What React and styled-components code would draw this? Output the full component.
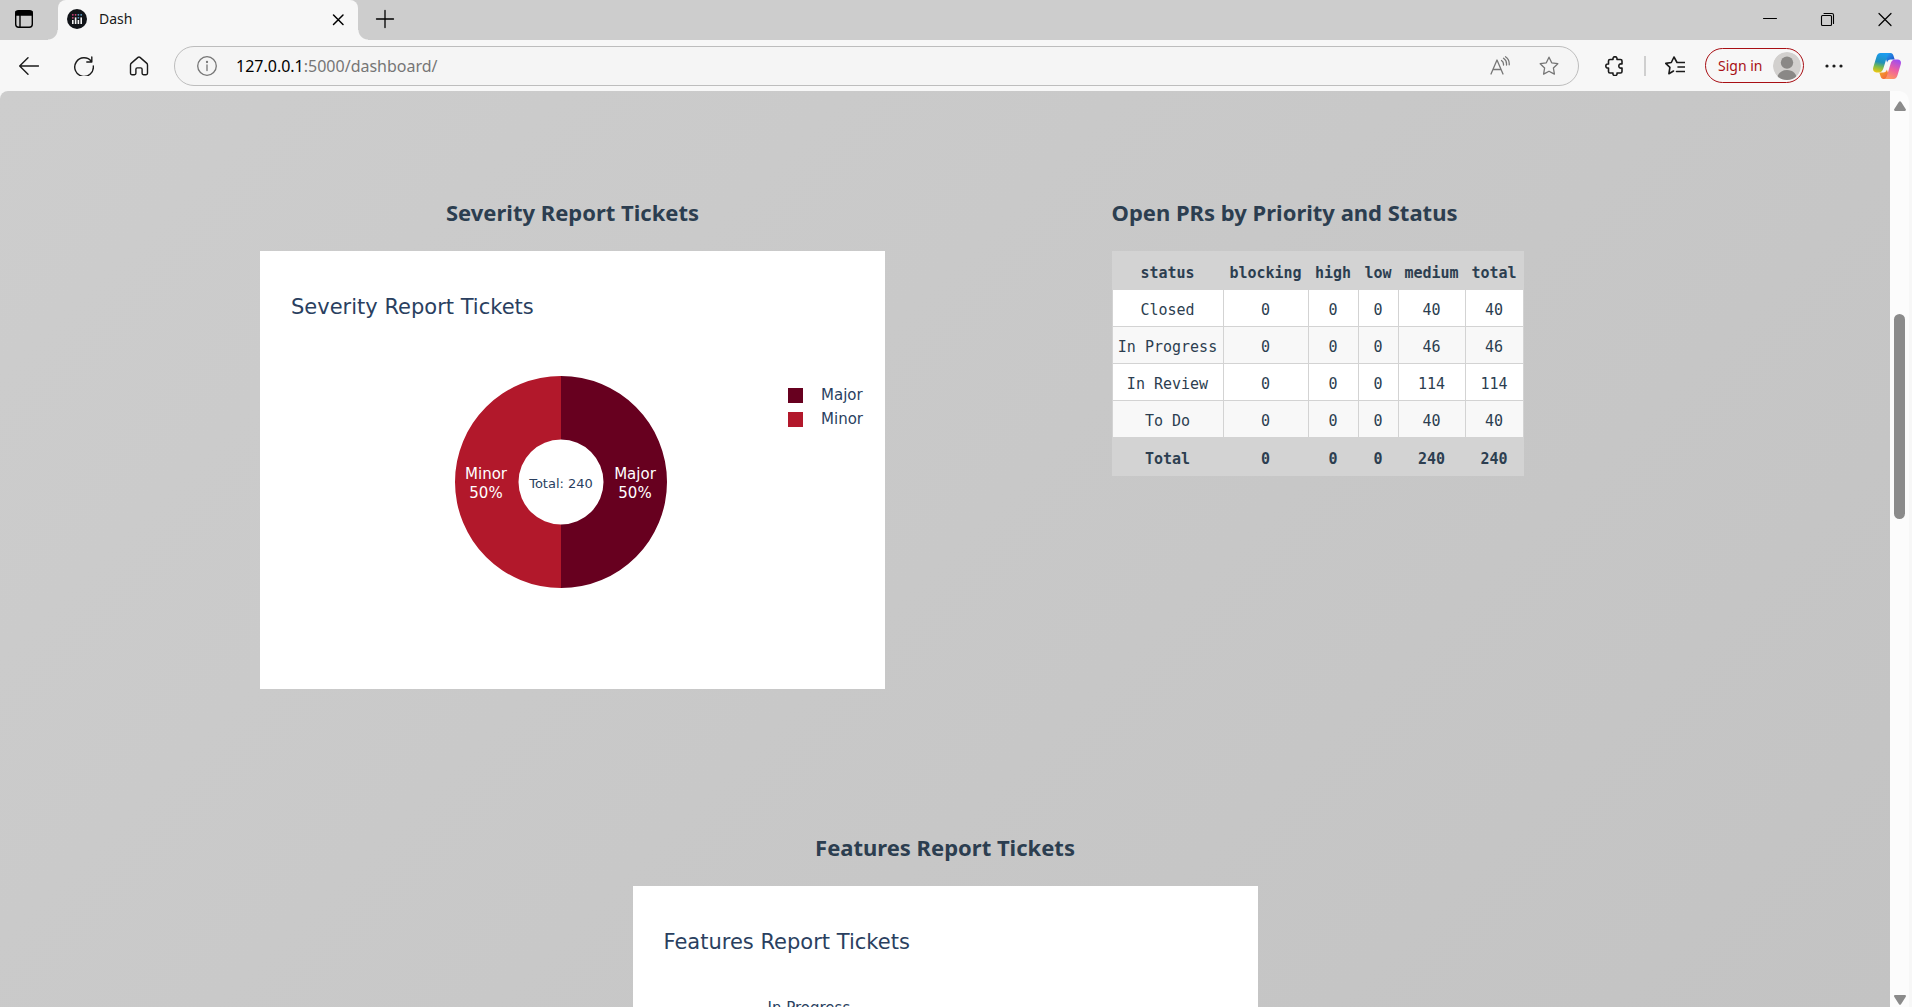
import React from "react";
import styled, { createGlobalStyle, css } from "styled-components";

const uiFont = `"Noto Sans", "Open Sans", sans-serif`;
const chartFont = `"DejaVu Sans", sans-serif`;
const monoFont = `"DejaVu Sans Mono", "Liberation Mono", monospace`;

const GlobalStyle = createGlobalStyle`
  *, *::before, *::after { box-sizing: border-box; }
  body { margin: 0; background: #f7f7f7; font-family: ${uiFont}; }
  h2, h3, figure, ul { margin: 0; padding: 0; }
  button { border: 0; padding: 0; background: none; font: inherit; color: inherit; }
`;

const Window = styled.div`
  height: 100vh;
  display: flex;
  flex-direction: column;
  overflow: hidden;
  background: #f7f7f7;
`;

/* ---------- tab strip ---------- */

const TabStrip = styled.header`
  flex: none;
  display: flex;
  height: 40px;
  background: #cdcdcd;
`;

const StripButton = styled.button`
  width: ${(p) => p.$width}px;
  height: 38px;
  display: grid;
  place-items: center;
`;

const flare = css`
  content: "";
  position: absolute;
  bottom: 0;
  width: 10px;
  height: 10px;
`;

const Tab = styled.div`
  position: relative;
  display: flex;
  align-items: center;
  width: 300px;
  height: 40px;
  margin: 0 0 0 10px;
  padding: 0 10px 2px 9px;
  gap: 12px;
  background: #f7f7f7;
  border-radius: 8px 8px 0 0;
  &::before {
    ${flare}
    left: -10px;
    background: radial-gradient(circle at 0 0, transparent 9px, #f7f7f7 10px);
  }
  &::after {
    ${flare}
    right: -10px;
    background: radial-gradient(circle at 100% 0, transparent 9px, #f7f7f7 10px);
  }
`;

const TabTitle = styled.span`
  flex: 1;
  font-size: 14px;
  line-height: 38px;
  color: #1a1a1a;
`;

const TabClose = styled.button`
  display: grid;
  width: 20px;
  height: 20px;
  place-items: center;
`;

const WindowControls = styled.div`
  display: flex;
  margin-left: auto;
`;

/* ---------- toolbar ---------- */

const Toolbar = styled.nav`
  flex: none;
  display: flex;
  align-items: center;
  height: 51px;
  padding: 0 9px 0 1px;
  color: #1b1b1b;
`;

const ToolButton = styled.button`
  flex: none;
  width: ${(p) => p.$width || 40}px;
  height: 40px;
  display: grid;
  place-items: center;
`;

const AddressBar = styled.div`
  flex: 1;
  display: flex;
  align-items: center;
  height: 40px;
  margin: 0 16px 0 8px;
  padding: 0 5px 0 12px;
  border: 1px solid #bdbdbd;
  border-radius: 20px;
  background: #f5f5f5;
  color: #767676;
`;

const Address = styled.a`
  flex: 1;
  margin-left: 9px;
  font-size: 16px;
  line-height: 38px;
  color: #767676;
  text-decoration: none;
  b { font-weight: 400; color: #000; }
`;

const Divider = styled.span`
  width: 2px;
  height: 20px;
  margin: 0 9px;
  background: #cfcfcf;
`;

const SignIn = styled.button`
  flex: none;
  display: flex;
  align-items: center;
  justify-content: space-between;
  width: 99px;
  height: 35px;
  margin: 0 10px;
  padding: 0 2px 0 12px;
  border: 1px solid #a80f14;
  border-radius: 18px;
  color: #a80f14;
  font-size: 14px;
`;

const CopilotButton = styled.button`
  margin-left: 17px;
  width: 32px;
  height: 32px;
  display: grid;
  place-items: center;
`;

/* ---------- page ---------- */

const Viewport = styled.div`
  flex: 1;
  min-height: 0;
  display: flex;
  margin-right: 3px;
  border-radius: 8px 10px 0 0;
  overflow: hidden;
  background: #fcfcfc;
`;

const Page = styled.main`
  flex: 1;
  min-width: 0;
  overflow: hidden;
  padding: 106px 200px 0;
  background: linear-gradient(135deg, #cdcdcd, #c3c3c3);
`;

const Row = styled.div`
  display: grid;
  grid-template-columns: repeat(${(p) => p.$columns}, minmax(0, 1fr));
  justify-items: center;
  margin-bottom: 143px;
`;

const Section = styled.section`
  display: flex;
  flex-direction: column;
  gap: 24px;
  max-width: 100%;
`;

const Heading = styled.h2`
  font-size: 22px;
  line-height: 30px;
  font-weight: 700;
  color: #2c3e50;
  text-align: ${(p) => p.$align || "center"};
`;

const Figure = styled.figure`
  width: 625px;
  max-width: 100%;
  height: 438px;
  padding: 40px 22px 0 31px;
  background: #fff;
  color: #2a3f5f;
  font-family: ${chartFont};
`;

const FigureTitle = styled.h3`
  font-size: 21px;
  line-height: 32px;
  font-weight: 400;
`;

const FigureBody = styled.div`
  display: flex;
  margin-top: 53px;
`;

const Plot = styled.div`
  flex: 1;
  display: flex;
  justify-content: center;
  padding: 0 5px 0 48px;
  svg { font-family: ${chartFont}; }
`;

const Legend = styled.ul`
  padding-top: 7px;
  list-style: none;
  font-size: 15px;
  line-height: 24px;
`;

const LegendItem = styled.li`
  display: flex;
  align-items: center;
  gap: 18px;
  &::before {
    content: "";
    width: 15px;
    height: 15px;
    background: ${(p) => p.$color};
  }
`;

const AxisLabels = styled.div`
  padding: 40px 0 0 104px;
  font-size: 15px;
  line-height: 20px;
`;

const Table = styled.table`
  width: 412px;
  table-layout: fixed;
  border-collapse: collapse;
  font-family: ${monoFont};
  font-size: 15px;
  line-height: 20px;
  color: #2c3e50;
  text-align: center;
  th, td {
    height: 37px;
    padding: 4px 0 0;
    border: 1px solid #d3d3d3;
    white-space: nowrap;
  }
  th, tfoot td { height: 38px; background: #d3d3d3; font-weight: 700; }
  tbody tr { background: #fff; }
  tbody tr:nth-child(even) { background: #f8f8f8; }
`;

const Col = styled.col`
  width: ${(p) => p.$width}px;
`;

/* ---------- scrollbar ---------- */

const ScrollTrack = styled.div`
  flex: none;
  width: 19px;
  display: flex;
  flex-direction: column;
  align-items: center;
  padding: 10px 0 2px;
`;

const ScrollThumb = styled.div`
  width: 11px;
  height: 205px;
  margin-top: 203px;
  border-radius: 6px;
  background: #8b8b8b;
`;

const ScrollArrow = styled.svg`
  margin-top: ${(p) => (p.$end ? "auto" : "0")};
`;

const Line = ({ size = 20, width = 1.4, children, ...rest }) => (
  <svg width={size} height={size} viewBox="0 0 20 20" fill="none" stroke="currentColor" strokeWidth={width} strokeLinecap="round" strokeLinejoin="round" aria-hidden="true" {...rest}>
    {children}
  </svg>
);

const DashLogo = () => (
  <svg width="20" height="20" viewBox="0 0 20 20" aria-hidden="true">
    <circle cx="10" cy="10" r="10" fill="#111419" />
    <g fill="#f4f4f4">
      <rect x="5" y="11" width="1.6" height="4" />
      <rect x="7.8" y="8.4" width="1.6" height="6.6" />
      <rect x="10.6" y="11" width="1.6" height="4" />
      <rect x="13.4" y="8.4" width="1.6" height="6.6" />
    </g>
    <g fill="#d0447c">
      <circle cx="5.8" cy="5.8" r="0.9" />
      <circle cx="5.8" cy="8.8" r="0.9" />
      <circle cx="8.6" cy="5.8" r="0.9" />
    </g>
    <g fill="#5c9dc8">
      <circle cx="11.4" cy="5.8" r="0.9" />
      <circle cx="11.4" cy="8.8" r="0.9" />
      <circle cx="14.2" cy="5.8" r="0.9" />
    </g>
  </svg>
);

const Avatar = () => (
  <svg width="28" height="28" viewBox="0 0 28 28" aria-hidden="true">
    <clipPath id="avatar"><circle cx="14" cy="14" r="14" /></clipPath>
    <g clipPath="url(#avatar)">
      <circle cx="14" cy="14" r="14" fill="#d2d0ce" />
      <circle cx="14" cy="10.6" r="6.2" fill="#8a8886" />
      <path d="M4 28c0-6 4-10 10-10s10 4 10 10z" fill="#8a8886" />
    </g>
  </svg>
);

const Copilot = () => (
  <svg width="28" height="26" viewBox="0 0 28 26" aria-hidden="true">
    <defs>
      <linearGradient id="cpA" x1="0.4" y1="0" x2="0.2" y2="1">
        <stop offset="0" stopColor="#1a9cf0" />
        <stop offset="0.45" stopColor="#2191b8" />
        <stop offset="0.7" stopColor="#7dbb4a" />
        <stop offset="1" stopColor="#f2c80f" />
      </linearGradient>
      <linearGradient id="cpB" x1="0.7" y1="0" x2="0.3" y2="1">
        <stop offset="0" stopColor="#a04df0" />
        <stop offset="0.5" stopColor="#ee5fa0" />
        <stop offset="1" stopColor="#ff9a5c" />
      </linearGradient>
      <linearGradient id="cpC" x1="0" y1="0" x2="1" y2="1">
        <stop offset="0" stopColor="#27b4f5" />
        <stop offset="1" stopColor="#1b3fc4" />
      </linearGradient>
      <linearGradient id="cpD" x1="0" y1="0" x2="1" y2="1">
        <stop offset="0" stopColor="#f5b51a" />
        <stop offset="1" stopColor="#f0524b" />
      </linearGradient>
    </defs>
    <path d="M11 0h6.600c1.500 0 2.300 1 2.800 2.400l1.300 4.100h-4c-2 0-3 1-3.600 3z" fill="url(#cpC)" />
    <path d="M17 26h-6.600c-1.500 0-2.300-1-2.800-2.400L6.300 19.400h4c2 0 3-1 3.600-3z" fill="url(#cpD)" />
    <path d="M7.500 0H17c-1.600.2-2.300 1.400-2.900 3.200L10.500 15c-.8 2.800-2 4.400-4.600 4.400H3.400C.4 19.400-.5 17 .3 14.300L3.400 4C4.200 1.400 5.400 0 7.500 0z" fill="url(#cpA)" />
    <path d="M20.500 26H11c1.600-.2 2.300-1.400 2.900-3.200L17.500 11c.8-2.800 2-4.500 4.600-4.500h2.500c3 0 3.900 2.400 3.100 5.100L24.600 22c-.8 2.600-2 4-4.100 4z" fill="url(#cpB)" />
  </svg>
);

const Donut = () => (
  <svg width="212" height="212" viewBox="0 0 212 212" role="img" aria-label="Severity donut chart">
    <path d="M106 0a106 106 0 0 1 0 212v-63.500a42.500 42.500 0 0 0 0-85z" fill="#67001f" />
    <path d="M106 0a106 106 0 0 0 0 212v-63.500a42.500 42.500 0 0 1 0-85z" fill="#b2182b" />
    <g fill="#fff" fontSize="15" textAnchor="middle">
      <text x="31" y="103">Minor</text>
      <text x="31" y="122">50%</text>
      <text x="180" y="103">Major</text>
      <text x="180" y="122">50%</text>
    </g>
    <text x="106" y="112" fill="#2a3f5f" fontSize="13" textAnchor="middle">Total: 240</text>
  </svg>
);

const columns = [
  ["status", 111],
  ["blocking", 85],
  ["high", 50],
  ["low", 40],
  ["medium", 67],
  ["total", 58],
];
const rows = [
  ["Closed", 0, 0, 0, 40, 40],
  ["In Progress", 0, 0, 0, 46, 46],
  ["In Review", 0, 0, 0, 114, 114],
  ["To Do", 0, 0, 0, 40, 40],
];
const totals = ["Total", 0, 0, 0, 240, 240];

const star = "M10 1.200l2.700 5.600 6.100.9-4.400 4.300 1 6.100L10 15.200l-5.400 2.900 1-6.100L1.200 7.700l6.100-.9z";

export default function App() {
  return (
    <Window>
      <GlobalStyle />
      <TabStrip>
        <StripButton $width={48} aria-label="Tab actions">
          <Line width={1.4}>
            <rect x="1.700" y="1.700" width="16.600" height="16.600" rx="3" />
            <path d="M2 2.500h16v3.500H2z" fill="currentColor" />
            <path d="M6 6v12" />
          </Line>
        </StripButton>
        <Tab>
          <DashLogo />
          <TabTitle>Dash</TabTitle>
          <TabClose aria-label="Close tab">
            <Line width={1.5}><path d="M5.500 6l9.500 9.500M15 6L5.500 15.500" /></Line>
          </TabClose>
        </Tab>
        <StripButton $width={54} aria-label="New tab">
          <Line width={1.300}><path d="M10 1.500v17M1.500 10h17" /></Line>
        </StripButton>
        <WindowControls>
          <StripButton $width={57} aria-label="Minimize">
            <Line width={1}><path d="M3.500 9.500h13" /></Line>
          </StripButton>
          <StripButton $width={57} aria-label="Restore">
            <Line width={1.100}>
              <rect x="4.500" y="6.500" width="10" height="10" rx="1" />
              <path d="M7 4.500h8c1 0 1.500.5 1.500 1.500v8.500" />
            </Line>
          </StripButton>
          <StripButton $width={57} aria-label="Close">
            <Line width={1.200}><path d="M5 4.500l12 12M17 4.500l-12 12" /></Line>
          </StripButton>
        </WindowControls>
      </TabStrip>

      <Toolbar>
        <ToolButton $width={55} aria-label="Back">
          <Line><path d="M19.500 10H.7M9 1.700L.7 10 9 18.300" /></Line>
        </ToolButton>
        <ToolButton $width={55} aria-label="Refresh">
          <Line><path d="M17.500 5.500A9.300 9.300 0 1 0 19.300 10M17.800 1v5h-5" /></Line>
        </ToolButton>
        <ToolButton $width={55} aria-label="Home">
          <Line><path d="M1.500 9c0-.8.300-1.400.9-1.900L9 1.400c.6-.5 1.400-.5 2 0l6.600 5.700c.6.5.9 1.100.9 1.900v8.300c0 .8-.6 1.400-1.400 1.400h-2.600c-.8 0-1.400-.6-1.400-1.400v-4c0-.8-.6-1.400-1.400-1.400H8.300c-.8 0-1.400.6-1.400 1.400v4c0 .8-.6 1.400-1.400 1.400H2.900c-.8 0-1.400-.6-1.400-1.400z" /></Line>
        </ToolButton>
        <AddressBar>
          <ToolButton aria-label="Site information">
            <Line width={1.300}>
              <circle cx="10" cy="10" r="9.300" />
              <path d="M10 9v5.500" />
              <circle cx="10" cy="6" r="0.500" fill="currentColor" />
            </Line>
          </ToolButton>
          <Address href="#dashboard"><b>127.0.0.1</b>:5000/dashboard/</Address>
          <ToolButton $width={49} aria-label="Read aloud">
            <Line width={1.300}>
              <path d="M1 18L7 4l6 14M3 13.500h8M11.500 4.500c1.500 1 2.200 2.500 2 4.500M13.500 2.300c2.200 1.400 3.300 3.700 3 6.700M15.500.8c2.700 1.800 4 4.600 3.700 8" />
            </Line>
          </ToolButton>
          <ToolButton $width={49} aria-label="Add to favorites">
            <Line width={1.300}><path d={star} /></Line>
          </ToolButton>
        </AddressBar>
        <ToolButton aria-label="Extensions">
          <Line width={1.600}>
            <path d="M5 3.500h3c-.3-1.900.7-2.800 2-2.800s2.300.9 2 2.800h3.500c.8 0 1.500.6 1.500 1.500V8c-2.500-.5-3.200.7-3.200 2s.7 2.500 3.200 2v3.500c0 .9-.7 1.500-1.500 1.500H12c.3 1.900-.7 2.600-2 2.600s-2.300-.7-2-2.600H5c-.9 0-1.500-.6-1.500-1.500V12C1.700 12.300.8 11.300.8 10s.9-2.300 2.700-2V5c0-.9.600-1.500 1.500-1.500z" />
          </Line>
        </ToolButton>
        <Divider />
        <ToolButton aria-label="Favorites">
          <Line width={1.600}>
            <path d="M13 6.500h-1L9 1 6.300 6.500.7 7.400l4.200 4-1 6.300L8.500 15M13 6.500h6.500M13 11h6.500M11.500 15.500h8" />
          </Line>
        </ToolButton>
        <SignIn>Sign in<Avatar /></SignIn>
        <ToolButton aria-label="Settings and more">
          <svg width="20" height="20" viewBox="0 0 20 20" fill="#1b1b1b" aria-hidden="true">
            <circle cx="3" cy="10" r="1.600" /><circle cx="10" cy="10" r="1.600" /><circle cx="17" cy="10" r="1.600" />
          </svg>
        </ToolButton>
        <CopilotButton aria-label="Copilot"><Copilot /></CopilotButton>
      </Toolbar>

      <Viewport>
        <Page>
          <Row $columns={2}>
            <Section>
              <Heading>Severity Report Tickets</Heading>
              <Figure>
                <FigureTitle>Severity Report Tickets</FigureTitle>
                <FigureBody>
                  <Plot><Donut /></Plot>
                  <Legend>
                    <LegendItem $color="#67001f">Major</LegendItem>
                    <LegendItem $color="#b2182b">Minor</LegendItem>
                  </Legend>
                </FigureBody>
              </Figure>
            </Section>
            <Section>
              <Heading $align="left">Open PRs by Priority and Status</Heading>
              <Table>
                <colgroup>{columns.map(([name, w]) => <Col key={name} $width={w} />)}</colgroup>
                <thead>
                  <tr>{columns.map(([name]) => <th key={name} scope="col">{name}</th>)}</tr>
                </thead>
                <tbody>
                  {rows.map((r) => (
                    <tr key={r[0]}>{r.map((v, i) => <td key={i}>{v}</td>)}</tr>
                  ))}
                </tbody>
                <tfoot>
                  <tr>{totals.map((v, i) => <td key={i}>{v}</td>)}</tr>
                </tfoot>
              </Table>
            </Section>
          </Row>
          <Row $columns={1}>
            <Section>
              <Heading>Features Report Tickets</Heading>
              <Figure>
                <FigureTitle>Features Report Tickets</FigureTitle>
                <AxisLabels>In Progress</AxisLabels>
              </Figure>
            </Section>
          </Row>
        </Page>
        <ScrollTrack>
          <ScrollArrow width="12" height="10" viewBox="0 0 12 10" fill="#8b8b8b" aria-hidden="true">
            <path d="M5 .8c.5-.8 1.500-.8 2 0l4.800 7.400c.4.800 0 1.800-1 1.800H1.200c-1 0-1.400-1-1-1.800z" />
          </ScrollArrow>
          <ScrollThumb />
          <ScrollArrow $end width="12" height="10" viewBox="0 0 12 10" fill="#8b8b8b" aria-hidden="true">
            <path d="M5 9.200c.5.800 1.500.8 2 0l4.800-7.400c.4-.8 0-1.800-1-1.800H1.200c-1 0-1.400 1-1 1.800z" />
          </ScrollArrow>
        </ScrollTrack>
      </Viewport>
    </Window>
  );
}
